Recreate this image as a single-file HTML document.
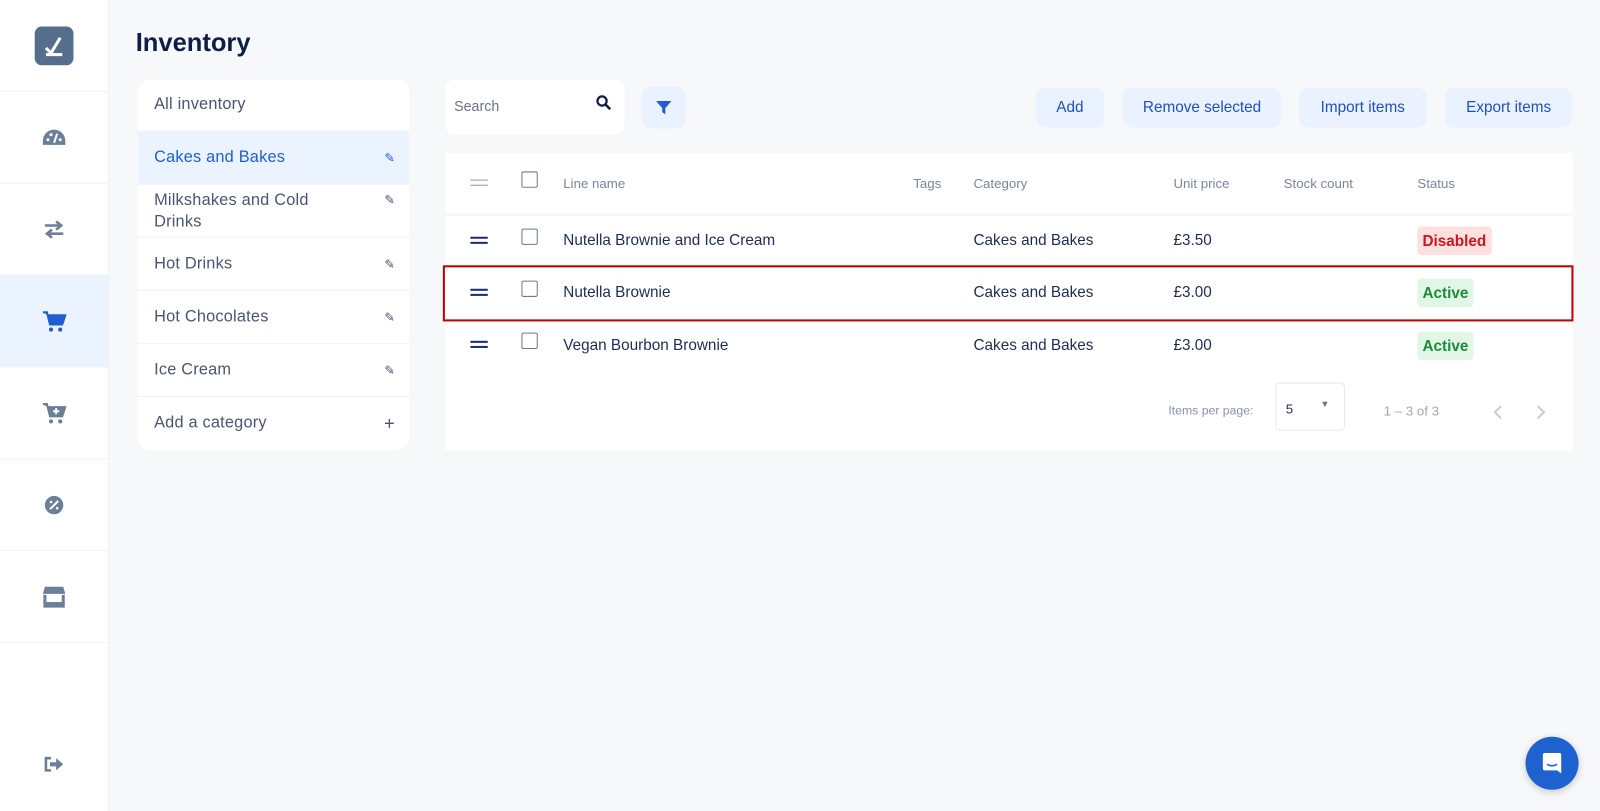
<!DOCTYPE html>
<html><head><meta charset="utf-8"><style>
*{box-sizing:border-box;margin:0;padding:0}
html,body{width:1600px;height:811px;overflow:hidden;background:#f7f8fa}
#w{width:1568px;height:795px;transform:scale(1.020408);transform-origin:0 0;position:relative;background:#f7f8fa;font-family:"Liberation Sans",sans-serif;color:#33415c}
.side{position:absolute;left:0;top:0;width:107px;height:795px;background:#fff;border-right:1px solid #eceff3}
.si{position:absolute;left:0;width:106px;height:90px;border-bottom:1px solid #f0f2f5;display:flex;align-items:center;justify-content:center}
.abs{position:absolute}
h1{position:absolute;left:133px;top:28px;font-size:25px;font-weight:bold;color:#0f1e46}
.cat{position:absolute;left:135px;top:78px;width:266px;height:363px;background:#fff;border-radius:12px;overflow:hidden}
.cr{height:52px;border-bottom:1px solid #f0f2f5;display:flex;align-items:center;justify-content:space-between;padding:0 14px 0 16px;font-size:16px;color:#4a5670;letter-spacing:.2px}
.cr.act{background:#ebf3fe;color:#1f5fd0}
.btn{position:absolute;top:86px;height:39px;background:#e9f2fe;border-radius:9px;color:#1f4fbf;font-size:15px;display:flex;align-items:center;justify-content:center}
.tbl{position:absolute;left:436px;top:150px;width:1105px;height:291px;background:#fff}
.t{position:absolute;font-size:15px;color:#1e2d50;white-space:nowrap}
.th{position:absolute;font-size:13px;color:#7a869c;top:172px}
.cb{position:absolute;left:511px;width:16px;height:16px;border:1.5px solid #6a7a95;border-radius:2px}
.dr{position:absolute;left:461px;width:17px;height:7px;border-top:2px solid #1e2d6e;border-bottom:2px solid #1e2d6e}
.badge{position:absolute;left:1389px;height:28px;padding:0 5px;border-radius:4px;font-size:15px;font-weight:bold;display:flex;align-items:center}
</style></head><body><div id="w">
<div class="side">
 <div class="si" style="top:0"><div style="width:38px;height:38px;background:#556e8c;border-radius:7px;display:flex;align-items:center;justify-content:center"><svg width="22" height="22" viewBox="0 0 22 22"><path d="M3 13 L8 18 L17 3" stroke="#fff" stroke-width="3" fill="none"/><rect x="3" y="18" width="16" height="3" fill="#fff"/></svg></div></div>
 <div class="si" style="top:90px"><svg width="24" height="20" viewBox="0 0 24 20"><path d="M12 2A11 11 0 0 0 1 13v4h22v-4A11 11 0 0 0 12 2z" fill="#6b7f96"/><circle cx="6" cy="12" r="1.5" fill="#fff"/><circle cx="9" cy="7" r="1.5" fill="#fff"/><circle cx="18" cy="12" r="1.5" fill="#fff"/><path d="M12 15L15 6" stroke="#fff" stroke-width="2"/></svg></div>
 <div class="si" style="top:180px"><svg width="22" height="18" viewBox="0 0 22 18"><path d="M2 5h15M13 1l5 4-5 4M20 13H5M9 9l-5 4 5 4" stroke="#6b7f96" stroke-width="2.5" fill="none"/></svg></div>
 <div class="si" style="top:270px;background:#ebf3fe"><svg width="24" height="22" viewBox="0 0 24 22"><path d="M1 2h4l3 12h12l3-9H6" fill="#1e5fd0" stroke="#1e5fd0" stroke-width="2"/><circle cx="9" cy="19" r="2" fill="#1e5fd0"/><circle cx="18" cy="19" r="2" fill="#1e5fd0"/></svg></div>
 <div class="si" style="top:360px"><svg width="24" height="22" viewBox="0 0 24 22"><path d="M1 2h4l3 12h12l3-9H6" fill="#6b7f96" stroke="#6b7f96" stroke-width="2"/><path d="M14 6v6M11 9h6" stroke="#fff" stroke-width="2"/><circle cx="9" cy="19" r="2" fill="#6b7f96"/><circle cx="18" cy="19" r="2" fill="#6b7f96"/></svg></div>
 <div class="si" style="top:450px"><svg width="22" height="22" viewBox="0 0 22 22"><circle cx="11" cy="11" r="9" fill="#6b7f96"/><path d="M7 15L15 7" stroke="#fff" stroke-width="2"/><circle cx="8" cy="8" r="1.3" fill="#fff"/><circle cx="14" cy="14" r="1.3" fill="#fff"/></svg></div>
 <div class="si" style="top:540px"><svg width="24" height="22" viewBox="0 0 24 22"><path d="M3 1h18l2 7H1z" fill="#6b7f96"/><path d="M3 9v11h18V9" fill="none" stroke="#6b7f96" stroke-width="3"/><rect x="3" y="16" width="18" height="4" fill="#6b7f96"/></svg></div>
 <div class="si" style="top:630px;border:none;height:165px;align-items:flex-end;padding-bottom:38px"><svg width="20" height="16" viewBox="0 0 20 16"><path d="M7 2H2v12h5" stroke="#6b7f96" stroke-width="2.5" fill="none"/><path d="M6 6h6V2l7 6-7 6v-4H6z" fill="#6b7f96"/></svg></div>
</div>
<h1>Inventory</h1>
<div class="cat">
 <div class="cr" style="height:51px">All inventory</div>
 <div class="cr act">Cakes and Bakes <span style="font-size:12px">✎</span></div>
 <div class="cr" style="line-height:21px">Milkshakes and Cold<br>Drinks<span style="font-size:12px;margin-top:-20px">✎</span></div>
 <div class="cr">Hot Drinks <span style="font-size:12px">✎</span></div>
 <div class="cr">Hot Chocolates <span style="font-size:12px">✎</span></div>
 <div class="cr">Ice Cream <span style="font-size:12px">✎</span></div>
 <div class="cr" style="border:none">Add a category <span style="font-size:18px">+</span></div>
</div>
<div class="abs" style="left:436px;top:78px;width:176px;height:54px;background:#fff;border-radius:10px"><span class="abs" style="left:9px;top:18px;font-size:14px;color:#6b7380">Search</span><svg class="abs" style="left:148px;top:15px" width="15" height="15" viewBox="0 0 15 15"><circle cx="6" cy="6" r="4.5" stroke="#0f1e46" stroke-width="2.2" fill="none"/><path d="M9.5 9.5L14 14" stroke="#0f1e46" stroke-width="2.5"/></svg></div>
<div class="abs" style="left:629px;top:85px;width:43px;height:41px;background:#e9f2fe;border-radius:9px;display:flex;align-items:center;justify-content:center"><svg width="15" height="15" viewBox="0 0 15 15"><path d="M0 1h15L9 8v6L6 12V8z" fill="#1e5fd0"/></svg></div>
<div class="btn" style="left:1015px;width:67px">Add</div>
<div class="btn" style="left:1100px;width:156px">Remove selected</div>
<div class="btn" style="left:1273px;width:125px">Import items</div>
<div class="btn" style="left:1416px;width:125px">Export items</div>
<div class="tbl"></div>
<div class="abs" style="left:436px;top:210px;width:1105px;height:1px;background:#eceff3"></div>
<div class="dr" style="top:176px;border-color:#8a9ab5;height:6px;border-width:1.5px"></div>
<div class="cb" style="top:168px"></div>
<div class="th" style="left:552px">Line name</div><div class="th" style="left:895px">Tags</div><div class="th" style="left:954px">Category</div><div class="th" style="left:1150px">Unit price</div><div class="th" style="left:1258px">Stock count</div><div class="th" style="left:1389px">Status</div>
<div class="dr" style="top:232px"></div><div class="cb" style="top:224px"></div>
<div class="t" style="left:552px;top:227px">Nutella Brownie and Ice Cream</div><div class="t" style="left:954px;top:227px">Cakes and Bakes</div><div class="t" style="left:1150px;top:227px">£3.50</div>
<div class="badge" style="top:222px;background:#fde0e0;color:#d0141c">Disabled</div>
<div class="dr" style="top:283px"></div><div class="cb" style="top:275px"></div>
<div class="t" style="left:552px;top:278px">Nutella Brownie</div><div class="t" style="left:954px;top:278px">Cakes and Bakes</div><div class="t" style="left:1150px;top:278px">£3.00</div>
<div class="badge" style="top:273px;background:#e2f6e6;color:#1e8a3c">Active</div>
<div class="dr" style="top:334px"></div><div class="cb" style="top:326px"></div>
<div class="t" style="left:552px;top:330px">Vegan Bourbon Brownie</div><div class="t" style="left:954px;top:330px">Cakes and Bakes</div><div class="t" style="left:1150px;top:330px">£3.00</div>
<div class="badge" style="top:325px;background:#e2f6e6;color:#1e8a3c">Active</div>
<div class="abs" style="left:434px;top:260px;width:1108px;height:55px;border:2px solid #c00000"></div>
<div class="abs" style="left:1145px;top:395px;font-size:12px;color:#8a94a6">Items per page:</div>
<div class="abs" style="left:1250px;top:375px;width:68px;height:47px;border:1px solid #e3e6eb;border-radius:4px"><span class="abs" style="left:9px;top:17px;font-size:13px;color:#1e2d50">5</span><span class="abs" style="left:43px;top:15px;font-size:9px;color:#6b7380">▼</span></div>
<div class="abs" style="left:1356px;top:395px;font-size:13px;color:#a0a8b8">1 – 3 of 3</div>
<svg class="abs" style="left:1462px;top:396px" width="12" height="16" viewBox="0 0 12 16"><path d="M9 2L3 8l6 6" stroke="#c8ceda" stroke-width="2" fill="none"/></svg>
<svg class="abs" style="left:1504px;top:396px" width="12" height="16" viewBox="0 0 12 16"><path d="M3 2l6 6-6 6" stroke="#c8ceda" stroke-width="2" fill="none"/></svg>
<div class="abs" style="left:1495px;top:722px;width:52px;height:52px;border-radius:50%;background:#1e62d0;box-shadow:0 2px 8px rgba(0,0,0,.2);display:flex;align-items:center;justify-content:center"><svg width="20" height="22" viewBox="0 0 20 22"><path d="M3 1h14a2 2 0 0 1 2 2v18l-4-3H3a2 2 0 0 1-2-2V3a2 2 0 0 1 2-2z" fill="#fff"/><path d="M5 12q5 3 10 0" stroke="#1e62d0" stroke-width="1.5" fill="none"/></svg></div>
</div></body></html>
